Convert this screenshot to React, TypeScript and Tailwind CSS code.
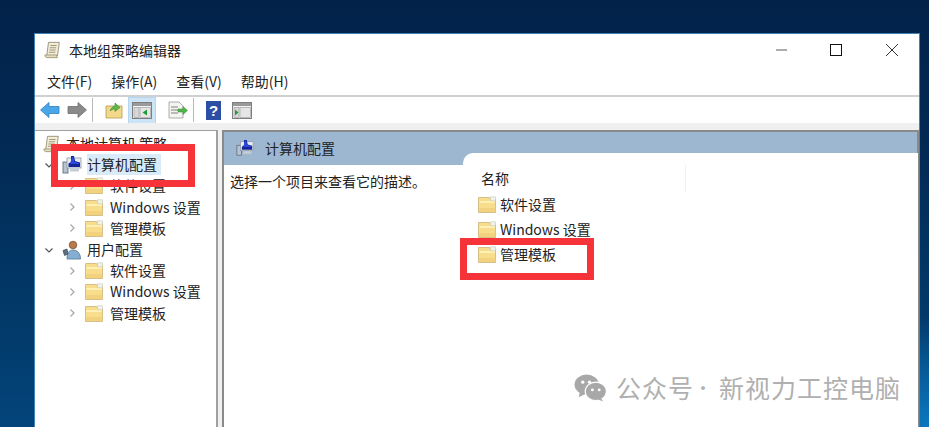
import React from "react";

function Folder({ className = "" }: { className?: string }) {
  return (
    <svg viewBox="0 0 18 17" className={`w-[18px] h-[17px] shrink-0 ${className}`}>
      <path d="M0.500 1.500h11l1 1.500h5v13.500H0.500z" fill="#f7dd8c" stroke="#d6c088" strokeWidth="1" />
      <path d="M1.500 5h15.500v2H1.500z" fill="#fff0b4" />
      <path d="M12.500 0.800h5v4h-5z" fill="#eef3ee" stroke="#c8c8b0" strokeWidth="0.600" />
      <path d="M1.200 12h16v4H1.200z" fill="#f2d27e" />
    </svg>
  );
}

function Chevron({ open }: { open?: boolean }) {
  return (
    <svg viewBox="0 0 10 10" className="w-[10px] h-[10px] shrink-0">
      {open ? (
        <path d="M1.500 3.500 5 7l3.500-3.500" fill="none" stroke="#555" strokeWidth="1.200" />
      ) : (
        <path d="M3.500 1.500 7 5 3.500 8.500" fill="none" stroke="#a6a6a6" strokeWidth="1.200" />
      )}
    </svg>
  );
}

function Computer({ size = 20 }: { size?: number }) {
  return (
    <svg viewBox="0 0 20 20" width={size} height={size} className="shrink-0">
      <rect x="1" y="7" width="5" height="11" fill="#b9c4cf" stroke="#5d7084" strokeWidth="0.900" />
      <rect x="5" y="3" width="14" height="10" fill="#e9edf1" stroke="#8a96a3" strokeWidth="0.800" />
      <path d="M9 1h3l1 5 5 1.500V12H6.500V8.500L9 7z" fill="#16249a" />
      <path d="M10 2h1.500l.7 4.500L17 8v1H8z" fill="#2b49d8" />
      <rect x="8" y="13.500" width="9" height="3" fill="#c4ccd4" />
    </svg>
  );
}

function Scroll({ size = 20 }: { size?: number }) {
  return (
    <svg viewBox="0 0 20 20" width={size} height={size} className="shrink-0">
      <path d="M5 1.500h12l-2 15H3z" fill="#f3edd8" stroke="#8d8468" strokeWidth="0.900" />
      <path d="M1 15.500h13c0 1.500 .5 2.500 1 3H3c-1 0-2-1-2-3z" fill="#e6dcba" stroke="#8d8468" strokeWidth="0.800" />
      <path d="M7 5h7M6.500 7.500h7M6 10h7M5.500 12.500h7" stroke="#8d8468" strokeWidth="0.900" />
    </svg>
  );
}

function User() {
  return (
    <svg viewBox="0 0 20 20" width={20} height={20} className="shrink-0">
      <circle cx="11" cy="5" r="3.800" fill="#b9794a" stroke="#6a4a30" strokeWidth="0.700" />
      <path d="M5 19c0-6 2-9 6-9s7.500 3 7.500 9z" fill="#86aed2" stroke="#54779a" strokeWidth="0.800" />
      <path d="M1 10.500 5 9l1 5-3.500 1.500z" fill="#5d6f82" stroke="#3c4650" strokeWidth="0.700" />
    </svg>
  );
}

function TreeRow({ label, level, icon, open, highlight }: { label: string; level: 0 | 1; icon: React.ReactNode; open?: boolean; highlight?: boolean }) {
  return (
    <div className={`flex h-[21.200px] items-center ${level === 1 ? "pl-[32px]" : "pl-[9px]"}`}>
      <Chevron open={open} />
      <div className={level === 1 ? "ml-[8px] mr-[7px]" : "ml-[8px] mr-[5px]"}>{icon}</div>
      <span className={`whitespace-nowrap leading-[21px] ${highlight ? "bg-[#d9ebf9] pr-1" : ""}`}>{label}</span>
    </div>
  );
}

function ToolSep() {
  return <div className="mx-[5px] h-[24px] w-px bg-[#b8b8b8]" />;
}

function Console({ arrow, active }: { arrow: "left" | "right"; active?: boolean }) {
  return (
    <div className={`flex h-[27px] w-[28px] items-center justify-center ${active ? "bg-[#cde4f7] border border-[#b4d6f0]" : ""}`}>
      <svg viewBox="0 0 20 17" className="w-[20px] h-[17px]">
        <rect x="0.500" y="0.500" width="19" height="16" fill="#f2f2f2" stroke="#7f7f7f" />
        <rect x="1" y="1" width="18" height="3" fill="#9a9a9a" />
        <rect x="2" y="5.500" width="5" height="10" fill="#d8d8d8" stroke="#999" strokeWidth="0.600" />
        <rect x="8" y="5.500" width="10.500" height="10" fill="#e6e6e6" stroke="#999" strokeWidth="0.600" />
        {arrow === "left" ? <path d="M15 7.500v6L10.500 10.500z" fill="#1f9d3a" /> : <path d="M3 7.500v6l3.500-3z" fill="#1f9d3a" />}
      </svg>
    </div>
  );
}

const tree: { label: string; level: 0 | 1; icon: React.ReactNode; open?: boolean }[] = [
  { label: "软件设置", level: 1, icon: <Folder /> },
  { label: "Windows 设置", level: 1, icon: <Folder /> },
  { label: "管理模板", level: 1, icon: <Folder /> },
  { label: "用户配置", level: 0, icon: <User />, open: true },
  { label: "软件设置", level: 1, icon: <Folder /> },
  { label: "Windows 设置", level: 1, icon: <Folder /> },
  { label: "管理模板", level: 1, icon: <Folder /> },
];

export default function App() {
  return (
    <div
      className="relative h-[427px] w-[929px] overflow-hidden bg-[radial-gradient(circle_at_100%_100%,#0a78c0_0,transparent_110px),linear-gradient(180deg,#02224a_0%,#022a54_35%,#023a6a_75%,#03447a_100%)] pl-[34px] pt-[33px] pr-[9px] text-[14px] text-[#222]"
      style={{ fontFamily: '"Noto Sans CJK SC", "Noto Sans", sans-serif' }}
    >
      <div className="flex h-[394px] flex-col border-l border-r border-t border-[#3f83b5] bg-white">
        {/* title bar */}
        <div className="flex h-[31px] shrink-0 items-center pl-[9px]">
          <Scroll size={18} />
          <span className="ml-[7px] leading-none text-[14px]">本地组策略编辑器</span>
          <div className="ml-auto flex items-center">
            <svg viewBox="0 0 14 14" className="w-[13px] h-[14px]"><path d="M1 7h12" stroke="#777" strokeWidth="1.300" /></svg>
            <svg viewBox="0 0 12 12" className="ml-[42px] w-[12px] h-[12px]"><rect x="0.500" y="0.500" width="11" height="11" fill="none" stroke="#111" /></svg>
            <svg viewBox="0 0 14 14" className="ml-[43px] mr-[20px] w-[14px] h-[14px]"><path d="M1 1l12 12M13 1 1 13" stroke="#333" strokeWidth="1" /></svg>
          </div>
        </div>
        {/* menu */}
        <div className="flex h-[32px] shrink-0 items-center gap-[19px] border-b-2 border-[#d0d0d0] pl-[12px] pt-[3px]">
          <span>文件(F)</span>
          <span>操作(A)</span>
          <span>查看(V)</span>
          <span>帮助(H)</span>
        </div>
        {/* toolbar */}
        <div className="flex h-[26px] shrink-0 items-center pl-[5px]">
          <svg viewBox="0 0 20 16" className="w-[20px] h-[16px]"><path d="M0.500 8 9 0.500V4.500h10v7H9v4z" fill="#4aa6e6" stroke="#2d7fc0" strokeWidth="0.800" /></svg>
          <svg viewBox="0 0 20 16" className="ml-[7px] w-[20px] h-[16px]"><path d="M19.500 8 11 0.500V4.500H1v7h10v4z" fill="#8a8a8a" stroke="#6e6e6e" strokeWidth="0.800" /></svg>
          <ToolSep />
          <svg viewBox="0 0 18 18" className="ml-[7px] w-[18px] h-[18px]">
            <path d="M1 5h16v12H1z" fill="#f2d98a" stroke="#b59a50" strokeWidth="0.800" />
            <path d="M5 10c1-3 3-5 5-5V2l5 4.500-5 4V8c-2 0-4 1-5 2z" fill="#5fb84a" stroke="#3f8a33" strokeWidth="0.600" />
          </svg>
          <div className="ml-[5px]"><Console arrow="left" active /></div>
          <svg viewBox="0 0 20 18" className="ml-[12px] w-[20px] h-[18px]">
            <path d="M1 1h10l4 4v12H1z" fill="#f4f4f0" stroke="#9a9a9a" strokeWidth="0.800" />
            <path d="M3 6h7M3 9h7M3 12h7" stroke="#7f7f7f" strokeWidth="1" />
            <path d="M10 8h5V5.500l4.500 4-4.500 4V11h-5z" fill="#4fb548" stroke="#3a8f36" strokeWidth="0.500" />
          </svg>
          <ToolSep />
          <div className="ml-[7px] flex h-[19px] w-[15px] items-center justify-center bg-[#2c4fa6] text-[15px] font-bold leading-none text-white" style={{ fontFamily: '"Liberation Sans", sans-serif' }}>?</div>
          <div className="ml-[7px]"><Console arrow="right" /></div>
        </div>
        <div className="h-[7px] shrink-0 bg-[#f0f0f0]" />
        {/* panes */}
        <div className="flex min-h-0 flex-1 overflow-hidden bg-[#f0f0f0]">
          <div className="h-full w-[183px] shrink-0 border-r-2 border-t border-[#a0a0a0] bg-white pt-[2px]">
            <div className="flex h-[21.200px] items-center pl-[8px]">
              <Scroll size={18} />
              <span className="ml-[5px] whitespace-nowrap">本地计算机 策略</span>
            </div>
            <TreeRow label="计算机配置" level={0} icon={<Computer />} open highlight />
            {tree.map((r, i) => (
              <TreeRow key={i} {...r} />
            ))}
          </div>
          <div className="ml-[4px] flex h-full flex-1 flex-col border-l-2 border-t-2 border-[#8a8a8a] bg-white">
            <div className="flex h-[33px] shrink-0 items-center bg-[#9db7d1] pl-[12px] pb-[1px]">
              <Computer size={18} />
              <span className="ml-[11px]">计算机配置</span>
            </div>
            <div className="pl-[6px] pt-[7px] leading-[19px]">选择一个项目来查看它的描述。</div>
          </div>
          <div className="w-[2px] shrink-0 bg-[#8a8a8a]" />
        </div>
      </div>

      {/* pasted patch over the header */}
      <div className="absolute left-[463px] top-[153px] h-[274px] w-[455px] rounded-tl-[10px] bg-white">
        <div className="absolute left-[18px] top-[15px] leading-[20px]">名称</div>
        <div className="absolute left-[222px] top-[12px] h-[28px] w-px bg-[#f2f2f2]" />
        <div className="absolute left-[15px] top-[39px] flex flex-col">
          {["软件设置", "Windows 设置", "管理模板"].map((t) => (
            <div key={t} className="flex h-[25px] items-center gap-[4px] whitespace-nowrap">
              <Folder />
              <span>{t}</span>
            </div>
          ))}
        </div>
        {/* watermark */}
        <div className="absolute left-[110px] top-[219px] flex items-center whitespace-nowrap text-[25px] leading-[30px] tracking-[1px] text-[#b0b0b0]">
          <svg viewBox="0 0 36 30" className="mr-[8px] w-[35px] h-[29px]">
            <ellipse cx="14" cy="12" rx="12.500" ry="10.500" fill="#a8a8a8" />
            <path d="M7 19l-1 6 6-3z" fill="#a8a8a8" />
            <ellipse cx="23.500" cy="19" rx="11" ry="9.500" fill="#a8a8a8" stroke="#fff" strokeWidth="1.200" />
            <path d="M29 26l2 3.500-5-2z" fill="#a8a8a8" />
            <circle cx="10" cy="9.500" r="1.700" fill="#fff" />
            <circle cx="17" cy="9.500" r="1.700" fill="#fff" />
            <circle cx="20" cy="17.500" r="1.500" fill="#fff" />
            <circle cx="27" cy="17.500" r="1.500" fill="#fff" />
          </svg>
          <span className="flex items-center">公众号<span className="w-[25px] pr-[9px] text-center text-[18px]">·</span>新视力工控电脑</span>
        </div>
      </div>

      {/* red annotation frames */}
      <div className="pointer-events-none absolute left-[51px] top-[144px] h-[43px] w-[144px] border-[7px] border-[#f53338]" />
      <div className="pointer-events-none absolute left-[460px] top-[238px] h-[42px] w-[134px] border-[7px] border-[#f53338]" />
    </div>
  );
}
